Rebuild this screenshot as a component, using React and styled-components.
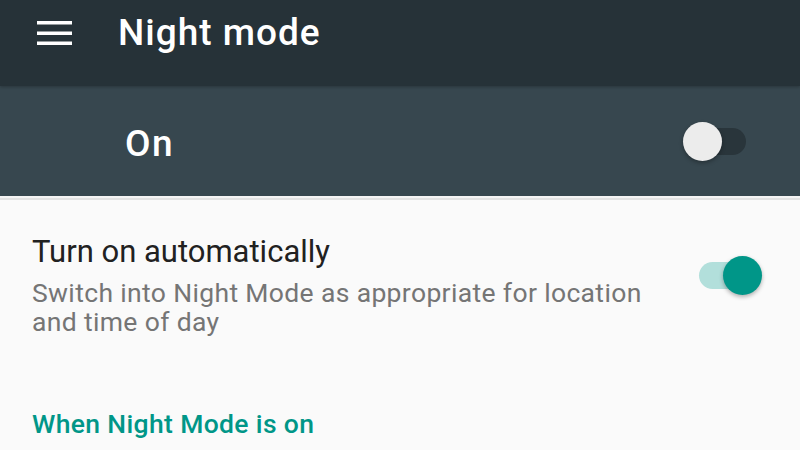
import React from "react";
import styled, { createGlobalStyle } from "styled-components";

const Global = createGlobalStyle`
  html, body { margin: 0; padding: 0; }
  body {
    width: 800px;
    height: 450px;
    overflow: hidden;
    background: #fafafa;
    font-family: Roboto, "Noto Sans", sans-serif;
  }
`;

const Page = styled.div`
  display: flex;
  flex-direction: column;
  width: 800px;
  height: 450px;
  background: #fafafa;
`;

const Toolbar = styled.header`
  display: flex;
  align-items: center;
  gap: 46px;
  height: 66px;
  padding: 0 0 20px 37px;
  background: #263238;
  position: relative;
  z-index: 1;
  box-shadow: 0 1px 3px rgba(0, 0, 0, 0.25);
`;

const Title = styled.h1`
  margin: 0;
  font-size: 37px;
  line-height: 36px;
  letter-spacing: 1px;
  font-weight: 500;
  color: #ffffff;
`;

const MasterBar = styled.section`
  display: flex;
  align-items: center;
  justify-content: space-between;
  height: 110px;
  padding: 0 53px 0 125px;
  background: #37474f;
  border-bottom: 2px solid #f4f4f4;
`;

const Divider = styled.div`
  height: 2px;
  background: #e2e2e2;
`;

const MasterLabel = styled.span`
  margin-top: 5px;
  font-size: 37px;
  line-height: 36px;
  letter-spacing: 1.5px;
  font-weight: 500;
  color: #ffffff;
`;

const PrefRow = styled.div`
  display: flex;
  align-items: center;
  padding: 34px 38px 0 32px;
`;

const PrefText = styled.div`
  flex: 1;
  display: flex;
  flex-direction: column;
  padding-right: 30px;
`;

const PrefTitle = styled.div`
  font-size: 31px;
  line-height: 36px;
  color: #212121;
  margin-bottom: 8px;
`;

const PrefSummary = styled.div`
  font-size: 26.5px;
  line-height: 29px;
  letter-spacing: 0.35px;
  color: #757575;
`;

const CategoryTitle = styled.h2`
  margin: 73px 0 0 32px;
  font-size: 26.5px;
  line-height: 29px;
  letter-spacing: 0.35px;
  font-weight: 500;
  color: #009688;
`;

const SwitchBox = styled.div`
  position: relative;
  flex: none;
  width: 64px;
  height: 39px;
  margin-top: ${(p) => p.$offset || 0}px;
`;

const Track = styled.div`
  position: absolute;
  left: 1px;
  right: 1px;
  top: 6px;
  height: 27px;
  border-radius: 14px;
  background: ${(p) => (p.$on ? "#b2dfdb" : "#29353b")};
`;

const Thumb = styled.div`
  position: absolute;
  top: 0;
  ${(p) => (p.$on ? "right: 0;" : "left: 0;")}
  width: 39px;
  height: 39px;
  border-radius: 50%;
  background: ${(p) => (p.$on ? "#009688" : "#ececec")};
  box-shadow: 0 2px 4px rgba(0, 0, 0, 0.3);
`;

function Switch({ on, offset }) {
  return (
    <SwitchBox $offset={offset}>
      <Track $on={on} />
      <Thumb $on={on} />
    </SwitchBox>
  );
}

function MenuIcon() {
  return (
    <svg width="35" height="24" viewBox="0 0 35 24" style={{ flex: "none" }}>
      <rect x="0" y="0" width="35" height="3.5" fill="#fff" />
      <rect x="0" y="10.5" width="35" height="3.5" fill="#fff" />
      <rect x="0" y="20.5" width="35" height="3.5" fill="#fff" />
    </svg>
  );
}

export default function App() {
  return (
    <Page>
      <Global />
      <Toolbar>
        <MenuIcon />
        <Title>Night mode</Title>
      </Toolbar>
      <MasterBar>
        <MasterLabel>On</MasterLabel>
        <Switch on={false} />
      </MasterBar>
      <Divider />
      <PrefRow>
        <PrefText>
          <PrefTitle>Turn on automatically</PrefTitle>
          <PrefSummary>
            Switch into Night Mode as appropriate for location and time of day
          </PrefSummary>
        </PrefText>
        <Switch on={true} offset={-19} />
      </PrefRow>
      <CategoryTitle>When Night Mode is on</CategoryTitle>
    </Page>
  );
}
